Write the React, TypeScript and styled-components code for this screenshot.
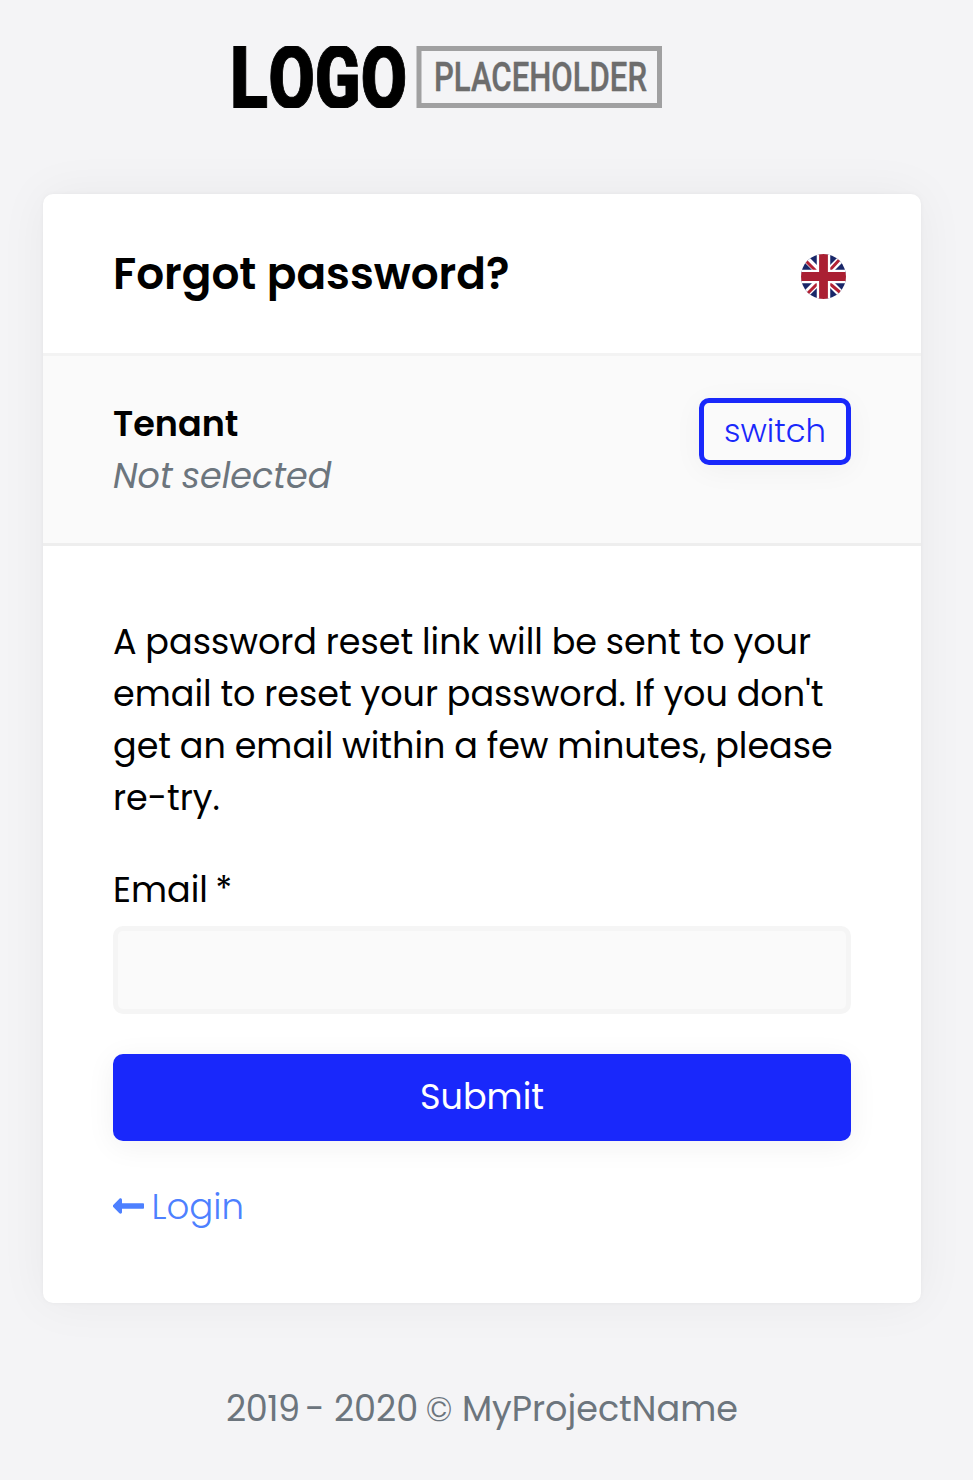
import React from "react";
import styled, { createGlobalStyle } from "styled-components";

const GlobalStyle = createGlobalStyle`
  *, *::before, *::after { box-sizing: border-box; }
  body {
    margin: 0;
    background: #f4f4f6;
    color: #000;
    font-family: Poppins, Inter, sans-serif;
    font-size: 35px;
    line-height: 52px;
  }
`;

const Page = styled.div`
  height: 1480px;
  padding: 46px 52px 0 43px;
  overflow: hidden;
  display: flex;
  flex-direction: column;
`;

const Logo = styled.svg`
  display: block;
  width: 430px;
  height: 62px;
  margin: 0 0 86px 189px;
  font-family: Roboto, "Liberation Sans", sans-serif;
`;

const Card = styled.main`
  height: 1109px;
  border-radius: 10px;
  background: #fff;
  box-shadow: 0 0 50px rgba(0, 0, 0, 0.05), 0 0 5px rgba(0, 0, 0, 0.04);
`;

const Header = styled.header`
  height: 159px;
  padding: 0 75px 0 70px;
  display: flex;
  align-items: center;
  justify-content: space-between;
`;

const Title = styled.h1`
  margin: 1px 0 0;
  font-size: 43.75px;
  font-weight: 600;
  line-height: 54px;
`;

const Flag = styled.svg`
  width: 45px;
  height: 45px;
  margin-top: 6px;
`;

const Tenant = styled.section`
  height: 193px;
  padding: 42px 70px 0;
  border-top: 3px solid #f3f3f3;
  border-bottom: 3px solid #eee;
  background: #fafafa;
  display: flex;
  align-items: flex-start;
  justify-content: space-between;
`;

const TenantName = styled.div`
  font-weight: 600;
`;

const TenantValue = styled.div`
  color: #6c757d;
  font-style: italic;
  word-spacing: -1.5px;
`;

const SwitchButton = styled.button`
  width: 152px;
  height: 67px;
  padding: 0 0 1px;
  border: 5px solid #1928fb;
  border-radius: 10px;
  background: transparent;
  color: #1928fb;
  font: inherit;
  font-size: 32.3px;
  font-weight: 300;
  line-height: 52px;
  box-shadow: 0 5px 30px rgba(0, 0, 0, 0.045);
`;

const Form = styled.form`
  padding: 70px 70px 0;
  display: flex;
  flex-direction: column;
  align-items: stretch;
`;

const Message = styled.p`
  margin: 0 0 40px;
  word-spacing: -0.6px;
`;

const Label = styled.label`
  height: 62px;
  word-spacing: -2px;
`;

const Input = styled.input`
  width: 100%;
  height: 88px;
  padding: 0 25px;
  border: 5px solid #f5f5f5;
  border-radius: 10px;
  outline: none;
  background: #fafafa;
  font: inherit;
`;

const Submit = styled.button`
  height: 87px;
  margin-top: 40px;
  padding: 0 0 1px;
  border: 0;
  border-radius: 10px;
  background: #1928fb;
  color: #fff;
  font: inherit;
  box-shadow: 0 5px 30px rgba(0, 0, 0, 0.06);
`;

const LoginLink = styled.a`
  height: 52px;
  margin-top: 40px;
  display: flex;
  align-items: center;
  gap: 7.5px;
  color: #4d80ff;
  font-size: 35.6px;
  font-weight: 300;
  text-decoration: none;
`;

const Arrow = styled.svg`
  width: 31px;
  height: 16px;
  margin-top: -2px;
`;

const Footer = styled.footer`
  margin-top: 80px;
  color: #6c757d;
  text-align: center;
`;

const StartYear = styled.span`
  margin-right: -3.5px;
  letter-spacing: -0.5px;
`;

const EndYear = styled.span`
  margin-right: -2px;
`;

const CopyrightSign = styled.span`
  font-size: 34px;
  font-weight: 300;
`;

function LogoMark() {
  return (
    <Logo viewBox="0 0 430 62" role="img" aria-label="Logo placeholder">
      <g fontSize="87" fontWeight="900" stroke="#000" strokeWidth="1">
        <text x="-2" y="62" textLength="38" lengthAdjust="spacingAndGlyphs">L</text>
        <text x="36.5" y="62" textLength="138.5" lengthAdjust="spacingAndGlyphs">OGO</text>
      </g>
      <rect x="187" y="2.5" width="240.5" height="57" fill="none" stroke="#a0a0a1" strokeWidth="5" />
      <text x="202" y="45" fontSize="40.5" fontWeight="500" fill="#6d6d6d" stroke="#6d6d6d" strokeWidth=".4" textLength="213" lengthAdjust="spacingAndGlyphs">PLACEHOLDER</text>
    </Logo>
  );
}

function BritishFlag() {
  return (
    <Flag viewBox="0 0 45 45" role="img" aria-label="English">
      <clipPath id="disc"><circle cx="22.5" cy="22.5" r="22.5" /></clipPath>
      <g clipPath="url(#disc)">
        <path fill="#192769" d="M0 0h45v45H0z" />
        <path stroke="#fff" strokeWidth="7" d="m0 0 45 45M45 0 0 45" />
        <path stroke="#b22235" strokeWidth="3" d="m4 6 11 11M28 17 40 4M28 29l13 11M17 29 5 41" />
        <path stroke="#fff" strokeWidth="13.5" d="M22.5 0v45M0 22.5h45" />
        <path stroke="#aa2033" strokeWidth="8.8" d="M22.5 0v45M0 22.5h45" />
      </g>
    </Flag>
  );
}

export default function App() {
  return (
    <>
      <GlobalStyle />
      <Page>
        <LogoMark />
        <Card>
          <Header>
            <Title>Forgot password?</Title>
            <BritishFlag />
          </Header>
          <Tenant>
            <div>
              <TenantName>Tenant</TenantName>
              <TenantValue>Not selected</TenantValue>
            </div>
            <SwitchButton>switch</SwitchButton>
          </Tenant>
          <Form onSubmit={(event) => event.preventDefault()}>
            <Message>
              A password reset link will be sent to your email to reset your password. If you don't
              get an email within a few minutes, please re-try.
            </Message>
            <Label htmlFor="email">Email *</Label>
            <Input id="email" type="email" />
            <Submit type="submit">Submit</Submit>
            <LoginLink href="#">
              <Arrow viewBox="0 0 31 16" aria-hidden="true">
                <path fill="currentColor" d="M0 7.2 6.4.7C7.4-.2 9 .5 9 1.8v3.5h21.2q.8 0 .8.8v3.8q0 .8-.8.8H9v3.5c0 1.3-1.6 2-2.6 1L0 8.8z" />
              </Arrow>
              Login
            </LoginLink>
          </Form>
        </Card>
        <Footer>
          <StartYear>2019</StartYear> - <EndYear>2020</EndYear> <CopyrightSign>©</CopyrightSign> MyProjectName
        </Footer>
      </Page>
    </>
  );
}
